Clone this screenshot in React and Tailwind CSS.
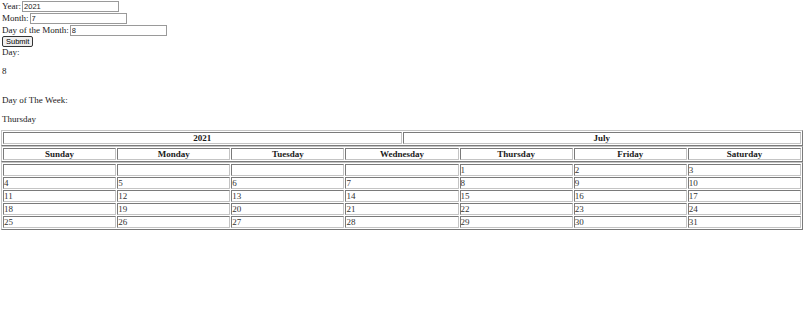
import React from "react";

const days = ["Sunday", "Monday", "Tuesday", "Wednesday", "Thursday", "Friday", "Saturday"];
const weeks = [
  ["", "", "", "", "1", "2", "3"],
  ["4", "5", "6", "7", "8", "9", "10"],
  ["11", "12", "13", "14", "15", "16", "17"],
  ["18", "19", "20", "21", "22", "23", "24"],
  ["25", "26", "27", "28", "29", "30", "31"],
];

function Field({ label, value }) {
  return (
    <div className="flex items-center h-[12px]">
      <span className="leading-[10px]">{label}</span>
      <input
        readOnly
        value={value}
        className="ml-[1px] w-[97px] h-[11px] border border-[#9a9a9a] bg-white px-[1px] text-[7.5px] leading-[9px] text-[#222] outline-none"
        style={{ fontFamily: '"Liberation Sans", Arial, sans-serif' }}
      />
    </div>
  );
}

export default function App() {
  const tableCls = "w-full border-separate border-spacing-[1px] border border-t-[#c4c4c4] border-l-[#c4c4c4] border-b-[#7a7a7a] border-r-[#7a7a7a]";
  const cellCls = "border border-t-[#7a7a7a] border-l-[#7a7a7a] border-b-[#c4c4c4] border-r-[#c4c4c4] p-0";
  return (
    <div
      className="w-[806px] h-[311px] bg-white text-[9px] text-[#1a1a1a] pl-[2px] pr-[3px]"
      style={{ fontFamily: '"Liberation Serif", "Times New Roman", serif' }}
    >
      <Field label="Year:" value="2021" />
      <Field label="Month:" value="7" />
      <Field label="Day of the Month:" value="8" />
      <div className="h-[11px] flex items-center">
        <button
          className="h-[11px] px-[3px] border border-[#333] rounded-[2px] bg-[#efefef] text-[7.5px] leading-[9px] text-black"
          style={{ fontFamily: '"Liberation Sans", Arial, sans-serif' }}
        >
          Submit
        </button>
      </div>
      <div className="leading-[10px]">Day:</div>
      <p className="leading-[10px] mt-[9px]">8</p>
      <div className="h-[10px] mt-[9px]"></div>
      <div className="leading-[10px]">Day of The Week:</div>
      <p className="leading-[10px] mt-[9px] mb-[6px]">Thursday</p>

      <div className="-ml-[1px]">
        <table className={tableCls}>
          <tbody>
            <tr>
              <th className={cellCls + " w-1/2 h-[12px] leading-[10px] font-bold"}>2021</th>
              <th className={cellCls + " w-1/2 h-[12px] leading-[10px] font-bold"}>July</th>
            </tr>
          </tbody>
        </table>
        <table className={tableCls + " table-fixed"}>
          <tbody>
            <tr>
              {days.map((d) => (
                <th key={d} className={cellCls + " h-[12px] leading-[10px] font-bold"}>{d}</th>
              ))}
            </tr>
          </tbody>
        </table>
        <table className={tableCls + " table-fixed"}>
          <tbody>
            {weeks.map((w, i) => (
              <tr key={i}>
                {w.map((d, j) => (
                  <td key={j} className={cellCls + " h-[12px] leading-[10px] text-left text-[#333]"}>{d}</td>
                ))}
              </tr>
            ))}
          </tbody>
        </table>
      </div>
    </div>
  );
}
